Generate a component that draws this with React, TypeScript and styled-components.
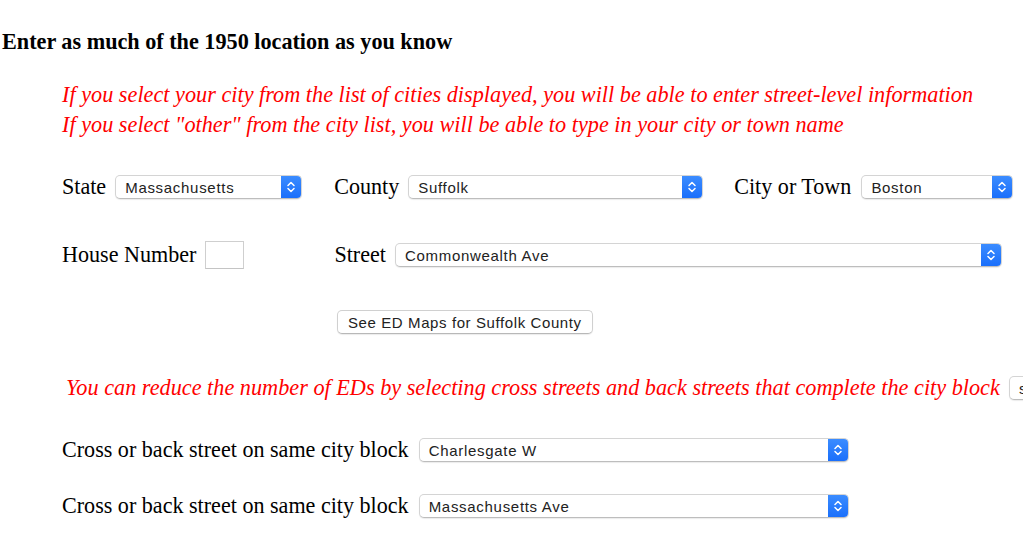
import React from "react";
import styled, { createGlobalStyle } from "styled-components";

const Global = createGlobalStyle`
  html, body { margin: 0; padding: 0; background: #fff; overflow: hidden; }
  body { font-family: "Liberation Serif", "Times New Roman", serif; color: #000; }
`;

const Page = styled.div`
  width: 1023px;
  height: 542px;
  overflow: hidden;
  display: flex;
  flex-direction: column;
`;

const Heading = styled.h3`
  margin: 30px 0 0 2px;
  font-size: 22.2px;
  line-height: 24px;
  font-weight: bold;
  white-space: nowrap;
`;

const Notice = styled.div<{ $top: number; $left: number }>`
  margin: ${(p) => p.$top}px 0 0 ${(p) => p.$left}px;
  color: #ff0000;
  font-style: italic;
  font-size: 22.25px;
  line-height: 30px;
  white-space: nowrap;
`;

const Row = styled.div<{ $top: number; $h: number }>`
  display: flex;
  align-items: center;
  height: ${(p) => p.$h}px;
  margin-top: ${(p) => p.$top}px;
  padding-left: 62px;
  white-space: nowrap;
`;

const Label = styled.span<{ $ml?: number; $mr?: number }>`
  font-size: 22.1px;
  margin-left: ${(p) => p.$ml ?? 0}px;
  margin-right: ${(p) => p.$mr ?? 9}px;
`;

const SelectBox = styled.div<{ $w: number }>`
  position: relative;
  flex: none;
  width: ${(p) => p.$w}px;
  height: 24px;
  box-sizing: border-box;
  border: 1px solid #d4d4d4;
  border-bottom-color: #bdbdbd;
  border-radius: 5px;
  background: #fff;
  box-shadow: 0 1px 1px rgba(0, 0, 0, 0.08);
  display: flex;
  align-items: center;
  overflow: hidden;
`;

const SelectText = styled.span`
  flex: 1;
  padding-left: 9px;
  font-family: "Liberation Sans", Arial, sans-serif;
  font-size: 15px;
  letter-spacing: 0.7px;
  color: #222;
  white-space: nowrap;
  overflow: hidden;
`;

const Arrow = styled.span`
  flex: none;
  width: 20px;
  height: 100%;
  background: linear-gradient(#3b8cff, #1a6ffb);
  display: flex;
  align-items: center;
  justify-content: center;
`;

const TextInput = styled.div`
  width: 39px;
  height: 28px;
  box-sizing: border-box;
  border: 1px solid #cfcfcf;
  border-bottom-color: #c4c4c4;
  background: #fff;
`;

const Button = styled.div`
  margin-left: 275px;
  height: 24px;
  box-sizing: border-box;
  padding: 0 10px;
  border: 1px solid #d0d0d0;
  border-bottom-color: #b8b8b8;
  border-radius: 5px;
  background: #fff;
  box-shadow: 0 1px 1px rgba(0, 0, 0, 0.08);
  font-family: "Liberation Sans", Arial, sans-serif;
  font-size: 15px;
  letter-spacing: 0.6px;
  color: #222;
  display: flex;
  align-items: center;
`;

const NoticeRow = styled.div`
  display: flex;
  align-items: center;
  margin-top: 39px;
  padding-left: 66px;
  height: 30px;
  white-space: nowrap;
`;

const InlineNotice = styled.span`
  color: #ff0000;
  font-style: italic;
  font-size: 22.25px;
  margin-right: 9px;
`;

const Chevrons = () => (
  <svg width="10" height="14" viewBox="0 0 10 14">
    <path d="M2 5.5 L5 2.5 L8 5.5 M2 8.5 L5 11.5 L8 8.5" fill="none" stroke="#fff" strokeWidth="1.5" strokeLinecap="round" strokeLinejoin="round" />
  </svg>
);

const Select = ({ w, value }: { w: number; value: string }) => (
  <SelectBox $w={w}>
    <SelectText>{value}</SelectText>
    <Arrow>
      <Chevrons />
    </Arrow>
  </SelectBox>
);

export default function App() {
  return (
    <Page>
      <Global />
      <Heading>Enter as much of the 1950 location as you know</Heading>
      <Notice $top={26} $left={62}>
        If you select your city from the list of cities displayed, you will be able to enter street-level information
        <br />
        If you select "other" from the city list, you will be able to type in your city or town name
      </Notice>
      <Row $top={35} $h={24}>
        <Label>State</Label>
        <Select w={187} value="Massachusetts" />
        <Label $ml={32}>County</Label>
        <Select w={295} value="Suffolk" />
        <Label $ml={31} $mr={10}>City or Town</Label>
        <Select w={152} value="Boston" />
      </Row>
      <Row $top={42} $h={28}>
        <Label>House Number</Label>
        <TextInput />
        <Label $ml={90}>Street</Label>
        <Select w={607} value="Commonwealth Ave" />
      </Row>
      <Row $top={41} $h={24}>
        <Button>See ED Maps for Suffolk County</Button>
      </Row>
      <NoticeRow>
        <InlineNotice>
          You can reduce the number of EDs by selecting cross streets and back streets that complete the city block
        </InlineNotice>
        <Select w={120} value="select" />
      </NoticeRow>
      <Row $top={35} $h={24}>
        <Label $mr={10}>Cross or back street on same city block</Label>
        <Select w={430} value="Charlesgate W" />
      </Row>
      <Row $top={32} $h={24}>
        <Label $mr={10}>Cross or back street on same city block</Label>
        <Select w={430} value="Massachusetts Ave" />
      </Row>
    </Page>
  );
}
